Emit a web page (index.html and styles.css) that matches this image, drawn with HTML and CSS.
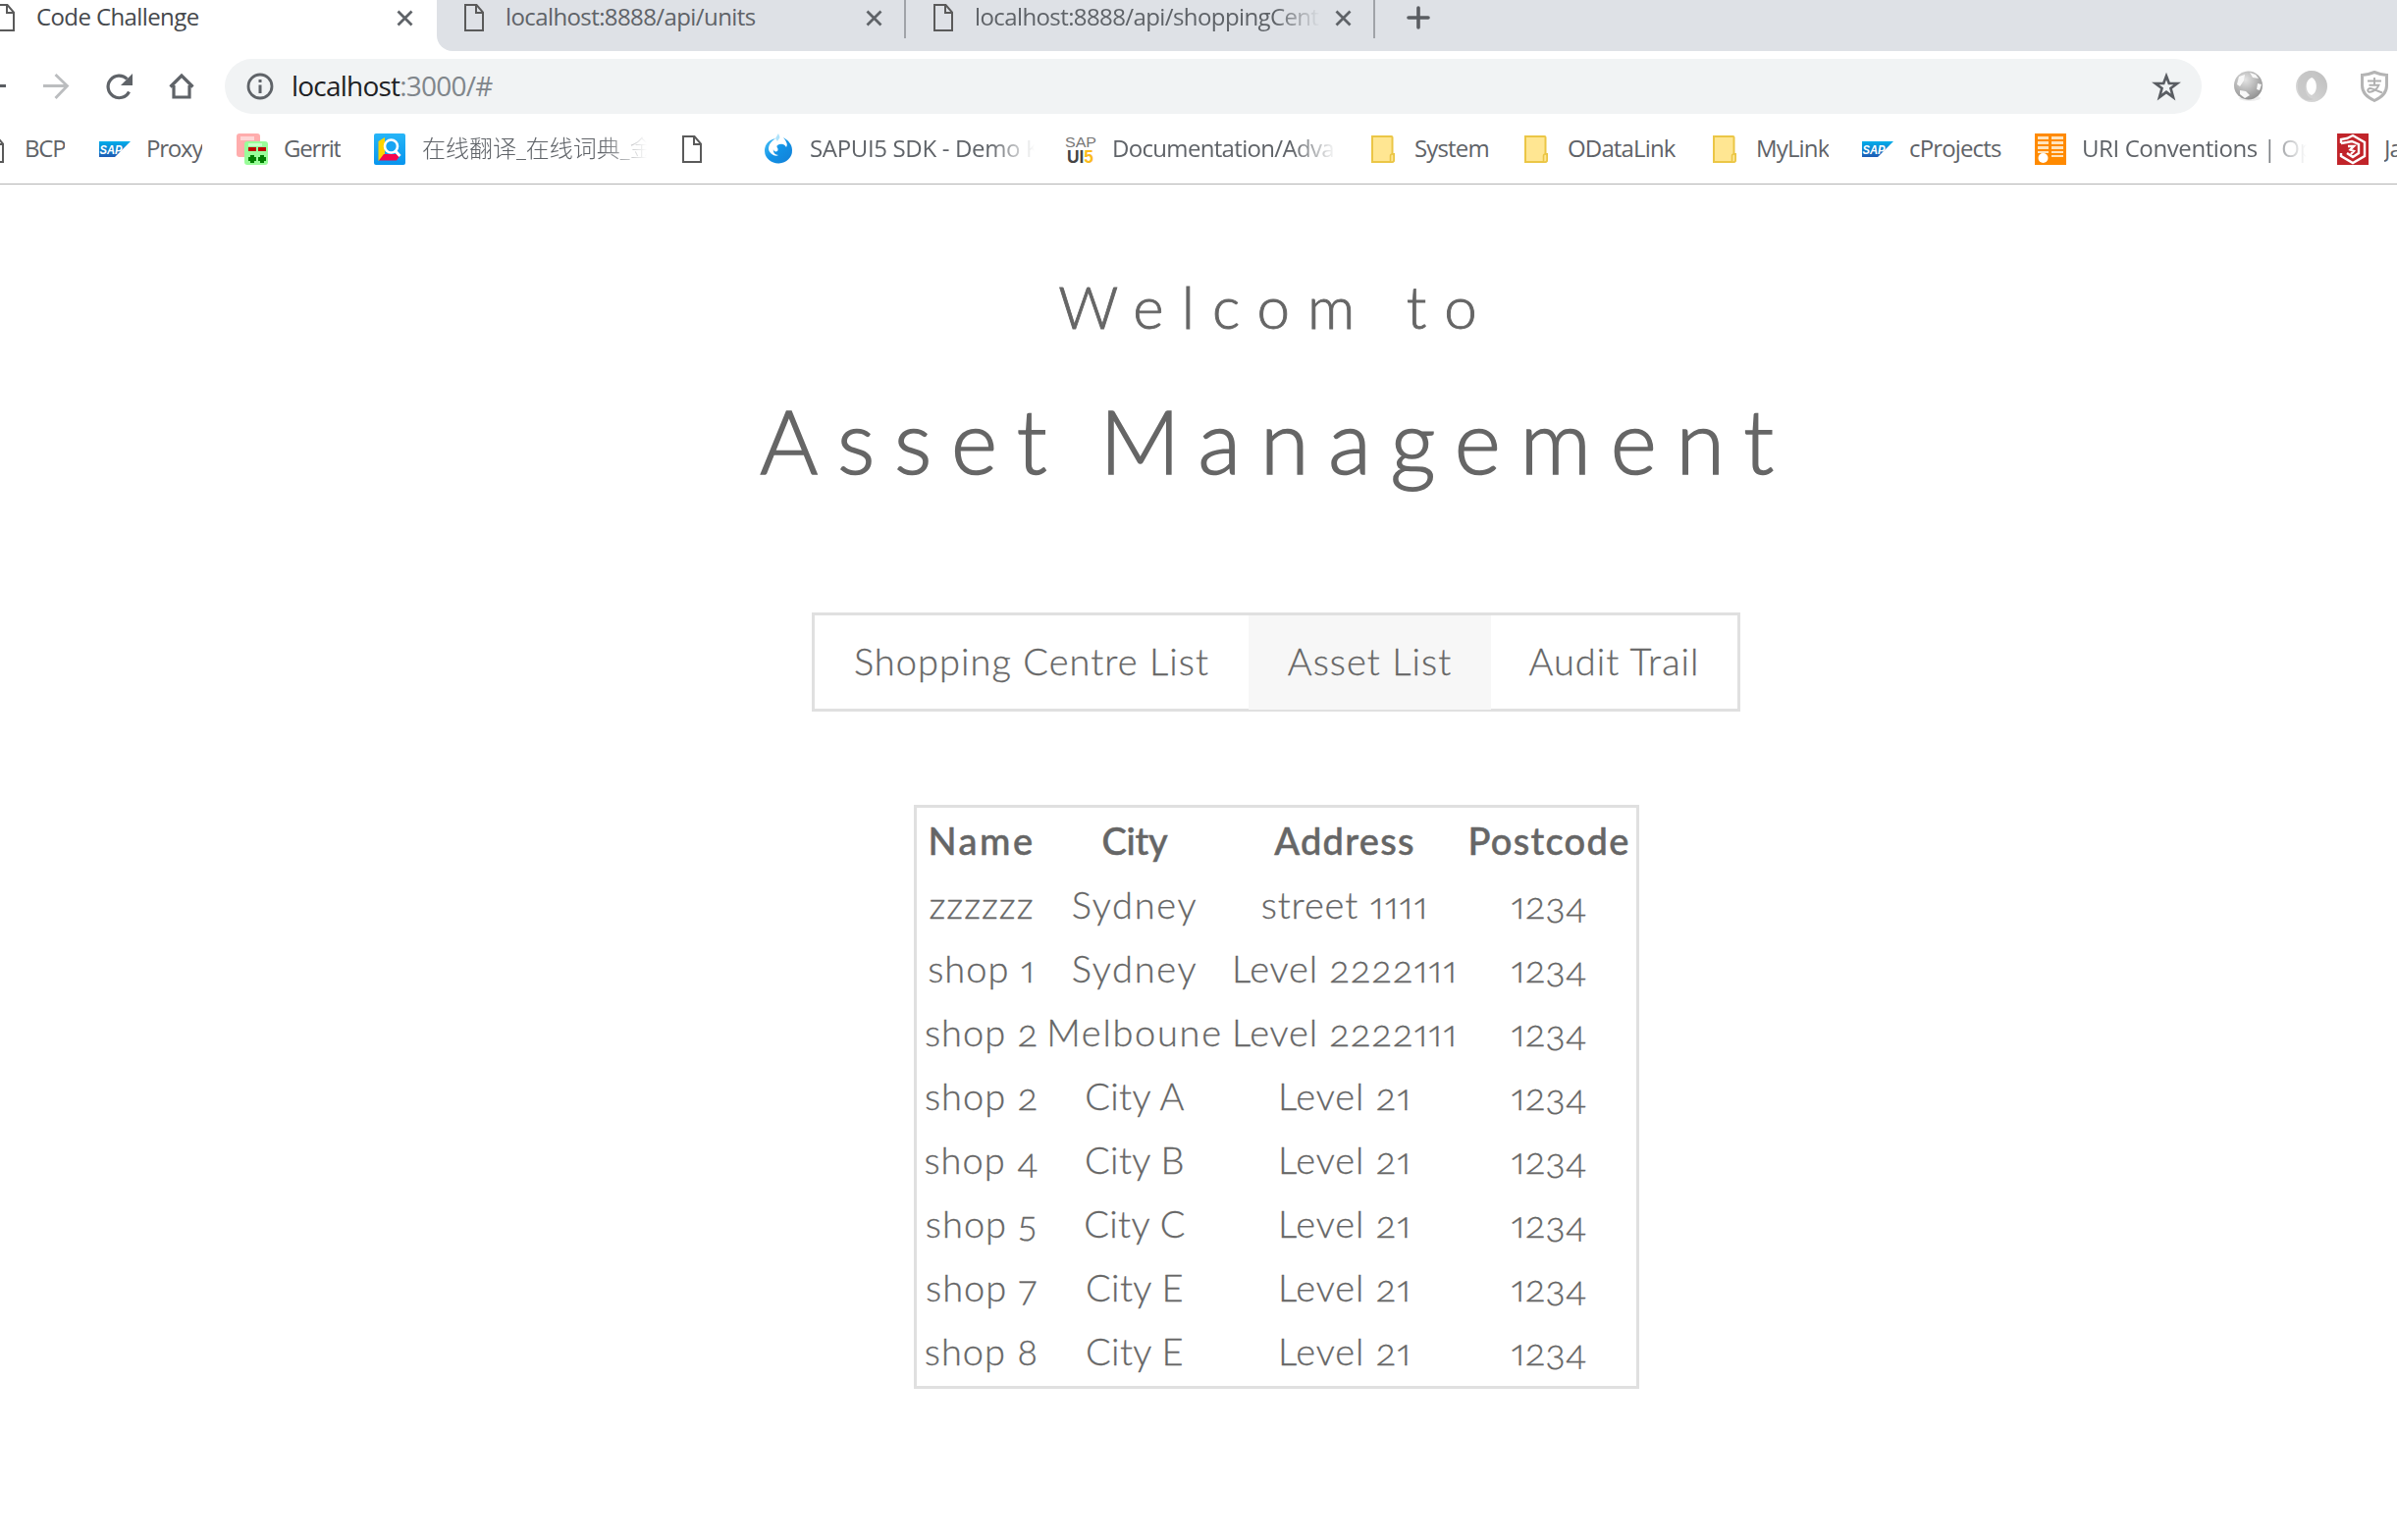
FILE: index.html
```html
<!DOCTYPE html>
<html lang="en">
<head>
<meta charset="utf-8">
<title>Code Challenge</title>
<link rel="stylesheet" href="styles.css">
</head>
<body>
<svg class="defs" aria-hidden="true">
  <symbol id="page" viewBox="0 0 20 28"><path d="M1 1H12.5L19 8.500V27H1Z M12 1V9H19" fill="none" stroke="#5a5a5a" stroke-width="2"/></symbol>
  <symbol id="close" viewBox="0 0 17 17"><path d="M1.500 1.500 15.500 15.500M15.500 1.500 1.500 15.500" stroke="#5f6368" stroke-width="2.800"/></symbol>
  <symbol id="folder" viewBox="0 0 24 28"><path d="M1 1H20.500Q21.500 1 21.500 2V19H23V25Q23 27 21 27H1Z" fill="#ffe692" stroke="#ebc646" stroke-width="2"/><path d="M19.500 27V21Q19.500 19 21.300 19T23 21V25Q23 27 21 27Z" fill="#ffe692" stroke="#ebc646" stroke-width="1.600"/></symbol>
  <linearGradient id="sapg" x1="0" y1="0" x2="0" y2="1"><stop offset="0" stop-color="#00aeeb"/><stop offset="1" stop-color="#1e5bb4"/></linearGradient>
  <symbol id="sap" viewBox="0 0 32 16"><path d="M0 0H32L16 16H0Z" fill="url(#sapg)"/><text x="0.500" y="12.500" class="sap-text" textLength="23" lengthAdjust="spacingAndGlyphs">SAP</text></symbol>
</svg>

<header class="tabs">
  <div class="tab tab-active">
    <svg class="page-icon"><use href="#page"/></svg>
    <span class="tab-label">Code Challenge</span>
    <svg class="close"><use href="#close"/></svg>
  </div>
  <div class="tab-rest">
    <div class="tab">
      <svg class="page-icon"><use href="#page"/></svg>
      <span class="tab-label">localhost:8888/api/units</span>
      <svg class="close"><use href="#close"/></svg>
    </div>
    <div class="tab">
      <svg class="page-icon"><use href="#page"/></svg>
      <span class="tab-label fade">localhost:8888/api/shoppingCent</span>
      <svg class="close"><use href="#close"/></svg>
    </div>
    <svg class="new-tab" viewBox="0 0 24 24"><path d="M12 2V22M2 12H22" stroke="#5a5d62" stroke-width="3.600" stroke-linecap="round"/></svg>
  </div>
</header>

<div class="toolbar">
  <svg class="back" viewBox="0 0 6 26"><path d="M0 12.500H6" stroke="#5a5d62" stroke-width="3"/></svg>
  <svg class="forward" viewBox="0 0 26 26"><path d="M0 12.500H24M12.500 1 24.500 12.500 12.500 25" fill="none" stroke="#bbbdbf" stroke-width="2.800"/></svg>
  <svg class="reload" viewBox="0 0 27 26"><path d="M23.500 18.500A11.300 11.300 0 1 1 21.500 5.500" fill="none" stroke="#5f6368" stroke-width="3.200"/><path d="M27 0V12H15Z" fill="#5f6368"/></svg>
  <svg class="home" viewBox="0 0 26 26"><path d="M1.500 13.500 13 2 24.500 13.500M5 12V24H21V12" fill="none" stroke="#5f6368" stroke-width="3.200"/></svg>
  <div class="omnibox">
    <svg class="info" viewBox="0 0 28 28"><circle cx="14" cy="14" r="12" fill="none" stroke="#5f6368" stroke-width="2.800"/><path d="M14 12.500V21M14 7V10" stroke="#5f6368" stroke-width="3"/></svg>
    <span class="url"><b>localhost</b>:3000/#</span>
    <svg class="star" viewBox="0 0 28 28"><path d="M14 3.500 16.800 11H25L18.500 16 21 25 14 19.800 7 25 9.500 16 3 11H11.200Z" fill="none" stroke="#5a5d62" stroke-width="2.700"/></svg>
  </div>
  <svg class="ext" viewBox="0 0 32 32"><defs><radialGradient id="globe" cx=".4" cy=".3" r=".75"><stop offset="0" stop-color="#e4e4e4"/><stop offset=".5" stop-color="#b8b8b8"/><stop offset="1" stop-color="#8d8d8d"/></radialGradient></defs><ellipse cx="17" cy="28" rx="11" ry="3" fill="#eee"/><circle cx="15.500" cy="15" r="14.500" fill="url(#globe)"/><path d="M6 6 12 4 11 10 7 16 4 14ZM17 2 23 4 26 8 20 7ZM25 13 29 14 27 20 24 19ZM7 20 13 21 17 25 12 28 7 24Z" fill="#f8f8f8"/></svg>
  <svg class="ext" viewBox="0 0 32 32"><defs><linearGradient id="ring" x1="0" y1="1" x2="1" y2="0"><stop offset="0" stop-color="#dedede"/><stop offset="1" stop-color="#bcbcbc"/></linearGradient></defs><path fill-rule="evenodd" d="M16 0A16 16 0 1 1 16 32 16 16 0 1 1 16 0ZM16 7C9 9 9 22 16 25 23 22 22 9 16 7Z" fill="url(#ring)"/><path d="M16 0C3 1 -1 15 4 25 8 31 14 31 18 29 8 27 6 12 16 7Z" fill="#c4c4c4" opacity=".7"/></svg>
  <svg class="ext" viewBox="0 0 32 32"><path d="M3.500 4.500Q10 4 16 1.500 22 4 28.500 4.500V15Q28.500 25 16 30.500 3.500 25 3.500 15Z" fill="none" stroke="#b4b4b4" stroke-width="3"/><path d="M9 10.500H23M16 7V15M10.500 14.800H20.500C19 19 13.500 22.500 10 21.500 8 20 10 17 13.500 18.300L24 22.500" fill="none" stroke="#b0b0b0" stroke-width="1.900"/></svg>
</div>

<nav class="bookmarks">
  <a class="bm w-bcp"><svg class="page-icon"><use href="#page"/></svg><span class="tight">BCP</span></a>
  <a class="bm w-proxy"><svg class="icon-sap"><use href="#sap"/></svg><span class="tight">Proxy</span></a>
  <a class="bm w-gerrit"><svg class="icon" viewBox="0 0 32 32"><rect width="24" height="24" rx="3" fill="#ffadad"/><path d="M4 3H18V7H4Z" fill="#ffd6d6"/><rect x="8" y="8" width="24" height="24" rx="3" fill="#99fd99"/><path d="M12 10H26V13H12Z" fill="#c9ffc9"/><path d="M12 14H20V18H12ZM22 14H30V18H22Z" fill="#bf0000"/><path d="M14 22H18V24H20V28H18V30H14V28H12V24H14ZM24 22H28V24H30V28H28V30H24V28H22V24H24Z" fill="#008000"/></svg><span class="tight">Gerrit</span></a>
  <a class="bm w-wide"><svg class="icon" viewBox="0 0 32 32"><defs><linearGradient id="dict" x1="0" y1="0" x2="0" y2="1"><stop offset="0" stop-color="#27b5f7"/><stop offset="1" stop-color="#0795ee"/></linearGradient></defs><rect width="32" height="32" rx="2" fill="url(#dict)"/><path d="M4.500 8 11 4V22L4.500 28Z" fill="#ffd400"/><path d="M5 27.500 10 21H27.500L23 27.500Z" fill="#f5064f"/><circle cx="17.500" cy="13" r="6.500" fill="#18a5f3" stroke="#fff" stroke-width="2.600"/><path d="M21.500 17.500 26.500 23" stroke="#fff" stroke-width="3"/></svg><span class="cjk fade">在线翻译_在线词典_金</span></a>
  <a class="bm w-page"><svg class="page-icon"><use href="#page"/></svg></a>
  <a class="bm w-wide"><svg class="icon" viewBox="0 0 32 32"><defs><linearGradient id="flame" x1="0" y1="0" x2="1" y2="1"><stop offset="0" stop-color="#4fc4f7"/><stop offset=".5" stop-color="#1192e6"/><stop offset="1" stop-color="#147fd6"/></linearGradient></defs><path d="M13 5C4 7 2 13 2 18A14 13 0 0 0 30 17C30 11 26 7 21 4 24 8 26 11 24 14 22 10 18 10 15 12 13 14 17 15 15 18 13 19 11 18 11 16 10 19 13 22 16 22 13 24 7 21 6 16 6 11 9 8 13 5Z" fill="url(#flame)"/><path d="M16 0 17.500 4 15 8 13 5Z" fill="#aee3fb"/></svg><span class="fade sdk">SAPUI5 SDK - Demo K</span></a>
  <a class="bm w-wide"><svg class="icon" viewBox="0 0 32 32"><text x="0" y="13.500" class="ui-a" textLength="32" lengthAdjust="spacingAndGlyphs">SAP</text><text x="2" y="30" class="ui-b" textLength="27" lengthAdjust="spacingAndGlyphs">UI<tspan fill="#fbbc1d">5</tspan></text></svg><span class="fade doc">Documentation/Adva</span></a>
  <a class="bm w-sys"><svg class="folder"><use href="#folder"/></svg><span>System</span></a>
  <a class="bm w-odata"><svg class="folder"><use href="#folder"/></svg><span>ODataLink</span></a>
  <a class="bm w-mylink"><svg class="folder"><use href="#folder"/></svg><span>MyLink</span></a>
  <a class="bm w-cproj"><svg class="icon-sap"><use href="#sap"/></svg><span>cProjects</span></a>
  <a class="bm w-wide"><svg class="icon" viewBox="0 0 32 32"><rect width="32" height="32" fill="#ff8a00"/><path d="M3 3H14V6H3ZM17 3H29V6H17ZM3 8H14V11H3ZM17 8H29V11H17ZM3 13H14V16H3ZM17 13H29V16H17ZM17 18H29V20H17ZM17 22H29V24H17ZM3 18H14V20H3Z" fill="#ffe3bd"/><circle cx="8.500" cy="25" r="5" fill="#fff"/></svg><span class="fade uri">URI Conventions | Op</span></a>
  <a class="bm"><svg class="icon" viewBox="0 0 32 32"><rect width="32" height="32" fill="#c1242a"/><path d="M4 10V6L10 5 16 2 28 9V23L16 30 4 23V20" fill="none" stroke="#fff" stroke-width="2.400"/><path d="M4 10 10 9 15 8 22 11V20L16 24 10 20M11 13 17 13 13.500 16.500 17 18 14 21" fill="none" stroke="#fff" stroke-width="2.400"/></svg><span>Java</span></a>
</nav>

<main>
  <h2>Welcom to</h2>
  <h1>Asset Management</h1>
  <nav class="menu">
    <a>Shopping Centre List</a>
    <a class="active">Asset List</a>
    <a>Audit Trail</a>
  </nav>
  <table>
    <colgroup><col class="c1"><col class="c2"><col class="c3"><col class="c4"></colgroup>
    <thead><tr><th>Name</th><th class="th-city">City</th><th>Address</th><th>Postcode</th></tr></thead>
    <tbody>
      <tr><td>zzzzzz</td><td>Sydney</td><td>street 1111</td><td>1234</td></tr>
      <tr><td>shop 1</td><td>Sydney</td><td>Level 2222111</td><td>1234</td></tr>
      <tr><td>shop 2</td><td>Melboune</td><td>Level 2222111</td><td>1234</td></tr>
      <tr><td>shop 2</td><td class="city">City A</td><td>Level 21</td><td>1234</td></tr>
      <tr><td>shop 4</td><td class="city">City B</td><td>Level 21</td><td>1234</td></tr>
      <tr><td>shop 5</td><td class="city">City C</td><td>Level 21</td><td>1234</td></tr>
      <tr><td>shop 7</td><td class="city">City E</td><td>Level 21</td><td>1234</td></tr>
      <tr><td>shop 8</td><td class="city">City E</td><td>Level 21</td><td>1234</td></tr>
    </tbody>
  </table>
</main>
</body>
</html>
```
FILE: styles.css
```css
* { box-sizing: border-box; }
html, body { margin: 0; height: 1569px; overflow: hidden; background: #fff; }
body { display: flex; flex-direction: column; font: 24px/34px "Open Sans", "Noto Sans CJK SC", sans-serif; color: #5f6368; }
svg { display: block; flex: none; overflow: visible; }
.defs { width: 0; height: 0; position: absolute; }
.fade { -webkit-mask-image: linear-gradient(to right, #000 calc(100% - 46px), transparent); mask-image: linear-gradient(to right, #000 calc(100% - 46px), transparent); }

/* Tab strip */
.tabs { display: flex; flex: none; height: 52px; }
.tab-rest { flex: 1; display: flex; background: #dee1e6; border-bottom-left-radius: 16px; }
.tab { display: flex; align-items: flex-start; width: 478px; height: 39px; padding: 0 22px 0 28px; border-right: 2px solid #a0a3a8; }
.tab-active { width: 450px; margin-left: -5px; padding: 0 24px 0 0; border: 0; color: #45484c; }
.page-icon { width: 20px; height: 28px; }
.tab .page-icon { margin-top: 4px; }
.tab-label { width: 352px; margin-left: 22px; overflow: hidden; white-space: nowrap; letter-spacing: -.6px; }
.tab .close { width: 17px; height: 17px; margin: 10px 0 0 auto; }
.new-tab { width: 24px; height: 24px; margin: 6px 0 0 32px; }

/* Toolbar */
.toolbar { display: flex; flex: none; align-items: center; height: 72px; }
.back { width: 6px; height: 26px; }
.forward { width: 26px; height: 26px; margin-left: 38px; }
.reload { width: 27px; height: 26px; margin-left: 38px; }
.home { width: 26px; height: 26px; margin-left: 37px; }
.omnibox { display: flex; align-items: center; width: 2014px; height: 56px; margin-left: 31px; padding: 0 22px; border-radius: 28px; background: #f1f3f4; }
.info { width: 28px; height: 28px; }
.url { margin: -2px auto 0 18px; font-size: 28px; letter-spacing: -.78px; color: #80868b; }
.url b { font-weight: 400; color: #202124; }
.star { width: 28px; height: 28px; }
.ext { width: 32px; height: 32px; margin-left: 32px; }

/* Bookmarks bar */
.bookmarks { display: flex; flex: none; height: 64px; padding-bottom: 7px; margin-left: -22px; border-bottom: 1px solid #b3b3b3; }
.bm { display: flex; flex: none; align-items: center; letter-spacing: -.85px; }
.bm span { margin: -2px 0 0 16px; white-space: nowrap; overflow: hidden; }
.bm .tight { letter-spacing: -1.2px; }
.icon { width: 32px; height: 32px; }
.icon-sap { width: 32px; height: 16px; }
.bm .page-icon { margin: 0 6px; }
.w-bcp .page-icon { margin-right: 5px; }
.folder { width: 24px; height: 28px; margin: 0 4px; }
.bm .fade { width: 229px; }
.bm .cjk { margin-left: 17px; font-weight: 300; letter-spacing: 0; }
.sdk { letter-spacing: -.34px; }
.doc { letter-spacing: -.68px; }
.uri { letter-spacing: -.4px; }
.w-bcp { width: 123px; }
.w-proxy, .w-gerrit { width: 140px; }
.w-wide { width: 308px; }
.w-page { width: 88px; }
.w-sys, .w-mylink { width: 156px; }
.w-odata { width: 192px; }
.w-cproj { width: 176px; }
.sap-text { font: italic 700 12px "Liberation Sans", sans-serif; letter-spacing: 0; fill: #fff; }
.ui-a { font: 400 15px "Liberation Sans", sans-serif; letter-spacing: 0; fill: #777; }
.ui-b { font: 700 18px "Liberation Sans", sans-serif; letter-spacing: 0; fill: #444; }

/* Page */
main { display: flex; flex-direction: column; align-items: center; padding: 88px 0 0 159px; font-family: Lato, sans-serif; font-weight: 300; font-variant-numeric: oldstyle-nums proportional-nums; color: #666; -webkit-text-stroke: .3px #666; }
h1, h2 { margin: 0; font-weight: 300; }
h2 { font-size: 60px; line-height: 72px; letter-spacing: 18px; -webkit-text-stroke-width: .9px; }
h1 { margin-top: 46px; font-size: 90px; line-height: 108px; letter-spacing: 19.8px; word-spacing: -10px; -webkit-text-stroke-width: 1.6px; }
.menu { display: grid; grid-template-columns: 442px 247px 251px; height: 101px; margin: 122px 1px 0 0; border: 3px solid #e0e0e0; font-size: 38px; line-height: 93px; letter-spacing: 1.05px; text-align: center; }
.menu a { height: 96px; }
.menu .active { background: #f7f7f7; }
table { width: 739px; margin-top: 95px; padding: 1px 5px 3px 0; border: 3px solid #e0e0e0; border-spacing: 0; table-layout: fixed; font-size: 38px; line-height: 65px; text-align: center; }
.c1 { width: 132px; }
.c2 { width: 180px; }
.c3 { width: 248px; }
.c4 { width: 168px; }
th, td { padding: 0; white-space: nowrap; }
th { font-weight: 500; letter-spacing: 1.3px; -webkit-text-stroke-width: .5px; }
th:first-child { letter-spacing: 2.5px; }
th.th-city { letter-spacing: -.3px; }
td { letter-spacing: .9px; }
td:first-child { letter-spacing: 1px; }
td:nth-child(2) { letter-spacing: 1.7px; }
td:last-child { letter-spacing: .3px; }
td.city:nth-child(2) { letter-spacing: .4px; }
```
